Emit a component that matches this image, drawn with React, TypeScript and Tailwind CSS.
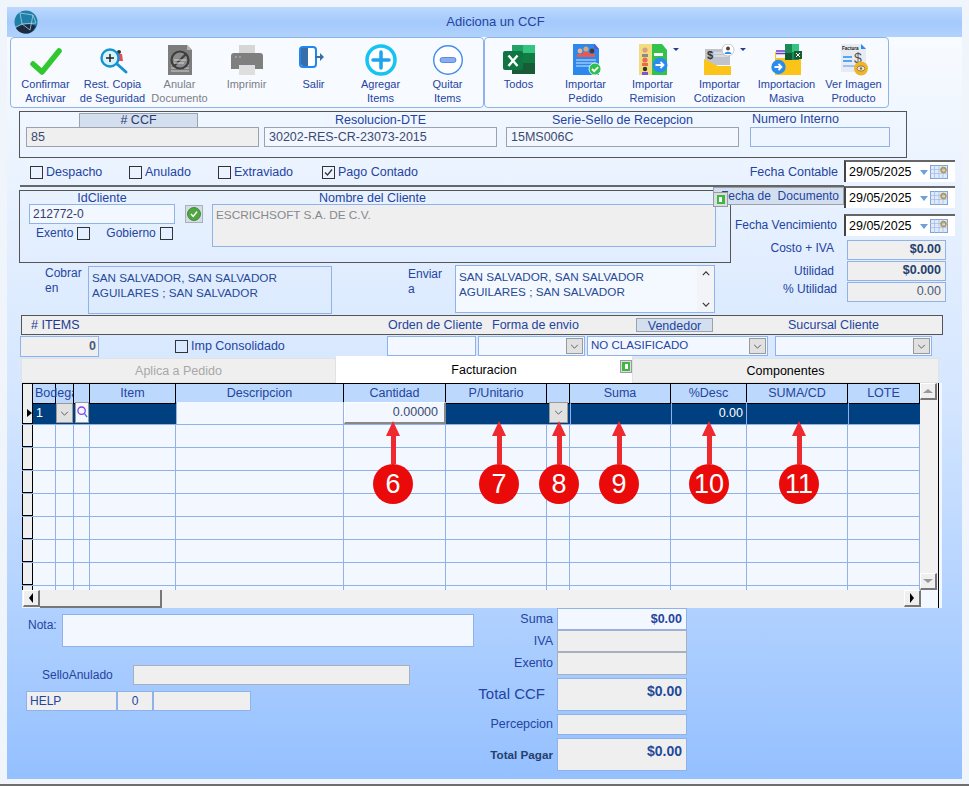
import type { ReactNode } from "react";

const font = "font-[Liberation_Sans,Arial,sans-serif] [font-family:Liberation_Sans,Arial,sans-serif]";
const blue = "text-[#2444a0]";

const COLS =
  "grid grid-cols-[11px_23px_18px_16px_86px_168px_102px_101px_23px_101px_76px_101px_72px]";

const toolbarLeft = [
  { a: "Confirmar", b: "Archivar", icon: <CheckIcon /> },
  { a: "Rest. Copia", b: "de Seguridad", icon: <RestIcon /> },
  { a: "Anular", b: "Documento", icon: <AnularIcon />, muted: true },
  { a: "Imprimir", b: "", icon: <PrintIcon />, muted: true },
  { a: "Salir", b: "", icon: <ExitIcon /> },
  { a: "Agregar", b: "Items", icon: <PlusIcon /> },
  { a: "Quitar", b: "Items", icon: <MinusIcon /> },
];

const toolbarRight = [
  { a: "Todos", b: "", icon: <ExcelIcon /> },
  { a: "Importar", b: "Pedido", icon: <PedidoIcon /> },
  { a: "Importar", b: "Remision", icon: <RemisionIcon />, menu: true },
  { a: "Importar", b: "Cotizacion", icon: <CotizacionIcon />, menu: true },
  { a: "Importacion", b: "Masiva", icon: <MasivaIcon /> },
  { a: "Ver Imagen", b: "Producto", icon: <VerIcon /> },
];

const markers = [
  { n: 6, pos: "left-[351px]" },
  { n: 7, pos: "left-[457px]" },
  { n: 8, pos: "left-[517px]" },
  { n: 9, pos: "left-[577px]" },
  { n: 10, pos: "left-[667px]" },
  { n: 11, pos: "left-[757px]" },
];

function CheckIcon() {
  return (
    <svg viewBox="0 0 32 32" className="w-8 h-8">
      <path d="M3 20l9 8L29 7" fill="none" stroke="#2fc92f" strokeWidth="5.5" strokeLinecap="round" strokeLinejoin="round" />
    </svg>
  );
}

function RestIcon() {
  return (
    <svg viewBox="0 0 32 32" className="w-8 h-8">
      <circle cx="22" cy="8" r="2" fill="#333" />
      <path d="M20 10h5l1 7h-6z" fill="#e0505a" />
      <circle cx="13" cy="14" r="8.5" fill="#d6f3fb" stroke="#1493d1" strokeWidth="2.4" />
      <path d="M13 10v8M9 14h8" stroke="#222" strokeWidth="1.5" />
      <path d="M20 20l9 8" stroke="#1493d1" strokeWidth="3" strokeLinecap="round" />
    </svg>
  );
}

function AnularIcon() {
  return (
    <svg viewBox="0 0 32 32" className="w-8 h-8">
      <path d="M4 1h19l5 5v25H4z" fill="#7d7d7d" />
      <path d="M23 1l5 5h-5z" fill="#b5b5b5" />
      <path d="M7 21h18M7 24h18M7 27h18" stroke="#cfcfcf" strokeWidth="1" />
      <circle cx="16" cy="16" r="8.5" fill="#8c8c8c" stroke="#3e3e3e" strokeWidth="2.2" />
      <path d="M10 22L22 10" stroke="#3e3e3e" strokeWidth="2.2" />
      <path d="M10 16h12M10 19h10" stroke="#d8d8d8" strokeWidth="1" />
    </svg>
  );
}

function PrintIcon() {
  return (
    <svg viewBox="0 0 32 32" className="w-8 h-8">
      <path d="M8 1h16v8H8z" fill="#d6d6d6" />
      <path d="M3 9h26a3 3 0 013 3v13H0V12a3 3 0 013-3z" fill="#7f7f7f" />
      <circle cx="5" cy="13" r="1" fill="#a8a8a8" />
      <circle cx="9" cy="13" r="1" fill="#a8a8a8" />
      <path d="M8 21h16v10H8z" fill="#dedede" />
    </svg>
  );
}

function ExitIcon() {
  return (
    <svg viewBox="0 0 32 32" className="w-8 h-8">
      <rect x="2" y="3" width="16" height="20" rx="3" fill="#fff" stroke="#1e88f0" strokeWidth="2" />
      <path d="M3 4h7v18H5a2 2 0 01-2-2z" fill="#3a6ea8" />
      <path d="M17 13h7" stroke="#3a6ea8" strokeWidth="2" />
      <path d="M22 9l4 4-4 4z" fill="#3a6ea8" />
    </svg>
  );
}

function PlusIcon() {
  return (
    <svg viewBox="0 0 32 32" className="w-8 h-8">
      <circle cx="16" cy="16" r="14" fill="#fff" stroke="#17c3f2" strokeWidth="3.5" />
      <path d="M16 8v16M8 16h16" stroke="#1ca5ee" strokeWidth="3.5" strokeLinecap="round" />
    </svg>
  );
}

function MinusIcon() {
  return (
    <svg viewBox="0 0 32 32" className="w-8 h-8">
      <circle cx="16" cy="16" r="14.3" fill="#fff" stroke="#3f8cf0" strokeWidth="1.4" />
      <rect x="8" y="13.5" width="16" height="5" rx="2.5" fill="#86aef0" stroke="#3f78e0" strokeWidth="0.8" />
    </svg>
  );
}

function ExcelIcon() {
  return (
    <svg viewBox="0 0 32 32" className="w-8 h-8">
      <path d="M9 1h23v29H9z" fill="#21a366" />
      <path d="M20 1h12v8H20z" fill="#33c481" />
      <path d="M20 9h12v10H20z" fill="#107c41" />
      <path d="M9 19h23v11H9z" fill="#185c37" />
      <rect x="0" y="7" width="20" height="19" rx="2" fill="#0f7542" />
      <path d="M5.5 11.5l9 10.5M14.5 11.5l-9 10.5" stroke="#fff" strokeWidth="2.4" />
    </svg>
  );
}

function PedidoIcon() {
  return (
    <svg viewBox="0 0 32 32" className="w-8 h-8">
      <path d="M3 0h22l4 5v26H3z" fill="#2d88ee" />
      <path d="M24 0l5 5h-5z" fill="#6b4fd8" />
      <circle cx="10" cy="7" r="2.4" fill="#f0b08a" />
      <circle cx="16" cy="5" r="2.6" fill="#e8a070" />
      <circle cx="22" cy="7" r="2.4" fill="#4a3a30" />
      <path d="M7 13v-3h6v3zM13 13V8h6v5zM19 13v-3h6v3z" fill="#e85a50" />
      <path d="M6 16h20M6 19h20M6 22h14" stroke="#cfe6ff" strokeWidth="1.2" />
      <circle cx="25" cy="25" r="6" fill="#2fc04f" stroke="#fff" strokeWidth="0.8" />
      <path d="M22 25l2.2 2.2 4-4" fill="none" stroke="#fff" strokeWidth="1.8" />
    </svg>
  );
}

function RemisionIcon() {
  return (
    <svg viewBox="0 0 32 32" className="w-8 h-8">
      <path d="M2 0h13v31H2z" fill="#f2dc80" />
      <path d="M15 0h10l5 6v25H15z" fill="#33c24a" />
      <path d="M17 9h9v3h-9zM17 16h7v3h-7z" fill="#fff" />
      <circle cx="8" cy="6" r="2.6" fill="#d9a080" />
      <path d="M5 13v-3h6v3z" fill="#8a8a8a" />
      <circle cx="8" cy="16" r="2.6" fill="#e86a50" />
      <path d="M5 22v-3h6v3z" fill="#e86a50" />
      <circle cx="8" cy="25" r="2.2" fill="#333" />
      <path d="M5 31v-3h6v3z" fill="#7a5ac8" />
      <circle cx="23" cy="21" r="7.5" fill="#2b8cf0" />
      <path d="M18.5 21h8M23.5 18l3 3-3 3" fill="none" stroke="#fff" strokeWidth="1.8" />
    </svg>
  );
}

function CotizacionIcon() {
  return (
    <svg viewBox="0 0 32 32" className="w-8 h-8">
      <path d="M1 5h25v16H1z" fill="#bfc4cc" />
      <path d="M10 9h14M10 12h14" stroke="#eef1f6" strokeWidth="1.2" />
      <text x="3" y="15" fontSize="11" fontWeight="700" fill="#333" fontFamily="Liberation Sans">$</text>
      <circle cx="24" cy="6" r="6" fill="#fff" stroke="#b5bcc8" strokeWidth="0.8" />
      <circle cx="24" cy="4.5" r="2" fill="#5a4030" />
      <path d="M20.5 10c.5-3 6.5-3 7 0z" fill="#2f8ce0" />
      <path d="M0 15l14 7h13v9H0z" fill="#fcc419" />
    </svg>
  );
}

function MasivaIcon() {
  return (
    <svg viewBox="0 0 32 32" className="w-8 h-8">
      <path d="M4 8h26v23H4z" fill="#fcc419" />
      <path d="M5 6h14v8H5z" fill="#f4f4f4" />
      <path d="M5 7h14M5 9.5h14" stroke="#6a3fc8" strokeWidth="1.3" />
      <path d="M14 0h14v16H14z" fill="#1c8a55" />
      <path d="M21 0h7v8h-7z" fill="#33c481" />
      <path d="M14 9h7v7h-7z" fill="#0f5a35" />
      <rect x="23" y="7" width="8" height="8" fill="#185c37" />
      <path d="M25 9l4 4M29 9l-4 4" stroke="#fff" strokeWidth="1" />
      <circle cx="7.5" cy="23" r="7.2" fill="#2b8cf0" />
      <path d="M3.5 23h7M7.5 20l3 3-3 3" fill="none" stroke="#fff" strokeWidth="1.8" />
    </svg>
  );
}

function VerIcon() {
  return (
    <svg viewBox="0 0 32 32" className="w-8 h-8">
      <path d="M3 0h21l4 4v24H3z" fill="#e7ecf3" />
      <path d="M23 0l5 5h-5z" fill="#2b8cf0" />
      <text x="4" y="5.5" fontSize="4.6" fontWeight="700" fill="#222" fontFamily="Liberation Sans">Factura</text>
      <path d="M5 13h9M5 17h9" stroke="#2b8cf0" strokeWidth="1.6" />
      <text x="16" y="19" fontSize="14" fill="#555" fontFamily="Liberation Sans">$</text>
      <path d="M5 22h14" stroke="#9fc2ee" strokeWidth="2" />
      <circle cx="23" cy="24.5" r="7" fill="#f0b429" />
      <ellipse cx="23" cy="24.5" rx="4" ry="2.6" fill="#f3e6c0" stroke="#7a6a50" strokeWidth="0.8" />
      <circle cx="23" cy="24.5" r="1.2" fill="#7a6a50" />
    </svg>
  );
}

function Globe() {
  return (
    <svg viewBox="0 0 24 24" className="w-6 h-6">
      <circle cx="12" cy="12" r="11.5" fill="#1f7fa8" />
      <path d="M2 18c4-4 14-5 20-2-3 6-6 7.5-10 7.5S4 22 2 18z" fill="#1d2a3f" />
      <path d="M6 3l2 11 8 6M6 3l13 2 3 8-14 1-6 3M19 5l-3 15" fill="none" stroke="#a8cfe0" strokeWidth="0.8" />
    </svg>
  );
}

function ToolButton({ a, b, icon, muted, menu }: { a: string; b: string; icon: ReactNode; muted?: boolean; menu?: boolean }) {
  return (
    <div className={`relative w-[67px] flex flex-col items-center text-[11px] leading-[14px] whitespace-nowrap ${muted ? "text-[#7b7f88]" : blue}`}>
      <div className="h-[39px] pt-[6px]">{icon}</div>
      <div>{a}</div>
      <div>{b}</div>
      {menu && <div className="absolute top-[10px] right-[7px] w-0 h-0 border-x-[3px] border-x-transparent border-t-[3px] border-t-[#1f3f90]" />}
    </div>
  );
}

function Check({ label, checked, className = "" }: { label: string; checked?: boolean; className?: string }) {
  return (
    <div className={`flex items-center gap-[3px] ${className}`}>
      <CheckBox checked={checked} />
      <span>{label}</span>
    </div>
  );
}

function CheckBox({ checked }: { checked?: boolean }) {
  return (
    <div className="w-[13px] h-[13px] border border-[#333] shrink-0">
      {checked && (
        <svg viewBox="0 0 11 11" className="w-[11px] h-[11px]">
          <path d="M2 5.5l2.5 2.5L9 2.5" fill="none" stroke="#333" strokeWidth="1.2" />
        </svg>
      )}
    </div>
  );
}

function Chevron({ className = "" }: { className?: string }) {
  return (
    <div className={`flex items-center justify-center bg-[#e1e1e1] border border-[#9a9a9a] ${className}`}>
      <svg viewBox="0 0 10 6" className="w-[9px] h-[5px]">
        <path d="M1 1l4 4 4-4" fill="none" stroke="#444" strokeWidth="1" />
      </svg>
    </div>
  );
}

function Select({ value = "", className = "" }: { value?: string; className?: string }) {
  return (
    <div className={`h-[20px] flex items-center justify-between bg-[#f3f7ff] border border-[#8fb3e8] pl-[3px] pr-[1px] ${className}`}>
      <span className="text-[11.5px]">{value}</span>
      <Chevron className="w-[17px] h-[16px]" />
    </div>
  );
}

function DateInput() {
  return (
    <div className="w-[111px] h-[22px] shrink-0 flex items-center bg-white border-t-2 border-l-2 border-t-[#666] border-l-[#444] pl-[3px] text-black">
      <span className="w-[71px]">29/05/2025</span>
      <div className="w-0 h-0 border-x-[4px] border-x-transparent border-t-[5px] border-t-[#6f9fdc]" />
      <svg viewBox="0 0 18 14" className="w-[18px] h-[14px] ml-[2px]">
        <rect x="0.5" y="0.5" width="17" height="13" fill="#dfe9fa" stroke="#7ea4dc" />
        <path d="M0 4.5h18M0 8.5h18M4.5 0v14M9 0v14M13 0v14" stroke="#9dbbe6" strokeWidth="0.7" />
        <circle cx="13.5" cy="5" r="2.4" fill="none" stroke="#b8964a" strokeWidth="1.6" />
      </svg>
    </div>
  );
}

function Stat({ label, value, bold, labelClass = "mr-[13px]" }: { label: string; value: string; bold?: boolean; labelClass?: string }) {
  return (
    <div className="flex items-center justify-end h-[21px] pr-[9px]">
      <span className={`text-[12px] whitespace-nowrap ${labelClass}`}>{label}</span>
      <div className={`w-[99px] h-[20px] flex items-center justify-end pr-[4px] bg-[#efefef] border border-[#8fb3e8] text-[#4a5a78] ${bold ? "font-bold text-[#24406f]" : ""}`}>
        {value}
      </div>
    </div>
  );
}

function SmallGreen({ className = "" }: { className?: string }) {
  return (
    <div className={`w-[12px] h-[13px] flex items-center justify-center bg-[#d8dde6] border border-[#9a9a9a] ${className}`}>
      <div className="w-[8px] h-[9px] bg-[#3fb83f] flex justify-center">
        <div className="w-[3px] h-[5px] mt-[2px] bg-white" />
      </div>
    </div>
  );
}

function Marker({ n, pos }: { n: number; pos: string }) {
  return (
    <div className={`absolute top-[38px] w-[40px] flex flex-col items-center ${pos}`}>
      <div className="w-0 h-0 border-x-[7.5px] border-x-transparent border-b-[15px] border-b-[#ee2a2e]" />
      <div className="w-[5px] h-[28px] bg-[#ee2a2e]" />
      <div className="w-[40px] h-[40px] rounded-full bg-[#ea0a0a] flex items-center justify-center text-white text-[27px] leading-none">
        {n}
      </div>
    </div>
  );
}

function EmptyRow() {
  return (
    <div className={`${COLS} h-[23px] border-b border-[#8fb3e8]`}>
      <div className="bg-[#efefef] border-x border-b border-x-black border-b-black" />
      {Array.from({ length: 12 }).map((_, i) => (
        <div key={i} className="border-r border-[#8fb3e8]" />
      ))}
    </div>
  );
}

function HeadCell({ children }: { children?: ReactNode }) {
  return (
    <div className="bg-[#bcd8fc] border-r border-y border-black flex items-center justify-center overflow-hidden whitespace-nowrap">
      {children}
    </div>
  );
}

function SumRow({ label, value, labelClass = "", boxClass = "h-[21px] border-[#8fb3e8] bg-[#efefef]" }: { label: string; value?: string; labelClass?: string; boxClass?: string }) {
  return (
    <div className="flex items-center justify-end">
      <span className={`mr-[4px] ${labelClass}`}>{label}</span>
      <div className={`w-[130px] shrink-0 flex justify-end pr-[4px] border ${boxClass}`}>{value}</div>
    </div>
  );
}

export default function App() {
  return (
    <div className={`w-[969px] h-[786px] overflow-hidden bg-[#f0f5fb] border-b-2 border-b-[#6e6e6e] px-[7px] pt-[7px] text-[12.5px] ${font} ${blue}`}>
      {/* Title bar */}
      <div className="relative w-[955px] h-[30px] flex items-center justify-center pl-[22px] bg-gradient-to-b from-[#bcd9ff] via-[#a4c9fc] to-[#b0d2fc] text-[13px]">
        <div className="absolute left-[7px] top-[3px]">
          <Globe />
        </div>
        Adiciona un CCF
      </div>

      <div className="w-[955px] h-[742px] bg-gradient-to-b from-[#f8fbff] via-[#d3e5ff] to-[#94c0ff]">
        {/* Toolbar */}
        <div className="flex ml-[3px]">
          <div className="w-[474px] h-[71px] flex pl-[1px] border border-[#8fb3e8] rounded-[4px] bg-[#f7faff]">
            {toolbarLeft.map((t) => (
              <ToolButton key={t.a} {...t} />
            ))}
          </div>
          <div className="w-[405px] h-[71px] flex border border-[#8fb3e8] rounded-[4px] bg-[#f7faff]">
            {toolbarRight.map((t) => (
              <ToolButton key={t.a + t.b} {...t} />
            ))}
          </div>
        </div>

        {/* Documento */}
        <div className="w-[888px] h-[47px] ml-[12px] mt-[3px] flex border border-[#555] pl-[6px] pt-[1px]">
          <div className="w-[233px]">
            <div className="w-[119px] h-[14px] ml-[53px] flex items-center justify-center bg-[#d3dfee] border border-b-0 border-[#9aa3ad] text-[#2a3a70]"># CCF</div>
            <div className="h-[20px] flex items-center pl-[4px] bg-[#efefef] border border-[#9aa3ad] text-[#3a4a70]">85</div>
          </div>
          <div className="w-[233px] ml-[5px]">
            <div className="h-[14px] leading-[14px] text-center">Resolucion-DTE</div>
            <div className="h-[20px] flex items-center pl-[4px] bg-[#f3f7ff] border border-[#9aa3ad] text-[#3a4a70]">30202-RES-CR-23073-2015</div>
          </div>
          <div className="w-[233px] ml-[9px]">
            <div className="h-[14px] leading-[14px] text-center">Serie-Sello de Recepcion</div>
            <div className="h-[20px] flex items-center pl-[4px] bg-[#f3f7ff] border border-[#9aa3ad] text-[#3a4a70]">15MS006C</div>
          </div>
          <div className="w-[140px] ml-[11px]">
            <div className="h-[14px] leading-[13px] pl-[2px]">Numero Interno</div>
            <div className="h-[20px] border border-[#8fb3e8]" />
          </div>
        </div>

        {/* Checks y fecha contable */}
        <div className="flex mt-[2px] ml-[13px] h-[27px]">
          <div className="w-[824px] flex items-center border-b-2 border-[#666] pl-[10px] pr-[6px]">
            <Check label="Despacho" className="w-[99px]" />
            <Check label="Anulado" className="w-[89px]" />
            <Check label="Extraviado" className="w-[104px]" />
            <Check label="Pago Contado" checked />
            <span className="ml-auto">Fecha Contable</span>
          </div>
          <DateInput />
        </div>

        <div className="flex h-[128px]">
          {/* Cliente */}
          <div className="w-[724px] pl-[12px]">
            <div className="w-[712px] h-[73px] mt-[3px] flex border border-[#555] pl-[9px]">
              <div className="w-[146px]">
                <div className="h-[13px] leading-[14px] text-center">IdCliente</div>
                <div className="h-[20px] flex items-center pl-[3px] text-[12px] bg-[#f3f7ff] border border-[#8fb3e8] text-[#33406a]">212772-0</div>
                <div className="flex items-center mt-[1px] h-[16px] pl-[7px] text-[12px]">
                  <span className="mr-[4px]">Exento</span>
                  <CheckBox />
                  <span className="ml-[16px] mr-[4px]">Gobierno</span>
                  <CheckBox />
                </div>
              </div>
              <div className="w-[18px] h-[18px] ml-[10px] mt-[14px] flex items-center justify-center bg-[#d6dce4] border border-[#a8b0ba]">
                <svg viewBox="0 0 14 14" className="w-[14px] h-[14px]">
                  <circle cx="7" cy="7" r="6.5" fill="#4fa83f" stroke="#2d7a2a" strokeWidth="0.8" />
                  <path d="M4 7l2.2 2.4L10 4.6" fill="none" stroke="#fff" strokeWidth="1.5" />
                </svg>
              </div>
              <div className="w-[504px] ml-[9px]">
                <div className="h-[13px] leading-[14px] pl-[107px]">Nombre del Cliente</div>
                <div className="h-[43px] bg-[#efefef] border border-[#8fb3e8] pl-[3px] pt-[2px] text-[11.8px] text-[#85888e]">ESCRICHSOFT S.A. DE C.V.</div>
              </div>
            </div>
            <div className="flex mt-[2px] leading-[15px] text-[12px]">
              <div className="w-[69px] pl-[26px] pt-[1px]">
                Cobrar
                <br />
                en
              </div>
              <div className="w-[244px] h-[48px] mt-[1px] border border-[#8fb3e8] pl-[3px] pt-[3px] text-[11.7px] text-[#274a96]">
                SAN SALVADOR, SAN SALVADOR
                <br />
                AGUILARES ; SAN SALVADOR
              </div>
              <div className="w-[47px] ml-[76px] pt-[2px]">
                Enviar
                <br />a
              </div>
              <div className="w-[260px] h-[48px] flex justify-between bg-[#f4f8ff] border border-[#8fb3e8] pl-[3px] pt-[3px] text-[11.7px] text-[#274a96]">
                <div>
                  SAN SALVADOR, SAN SALVADOR
                  <br />
                  AGUILARES ; SAN SALVADOR
                </div>
                <div className="w-[17px] -mt-[3px] flex flex-col justify-between items-center py-[5px] bg-[#f2f4f7]">
                  <svg viewBox="0 0 10 6" className="w-[8px] h-[5px]"><path d="M1 5l4-4 4 4" fill="none" stroke="#333" strokeWidth="1.4" /></svg>
                  <svg viewBox="0 0 10 6" className="w-[8px] h-[5px]"><path d="M1 1l4 4 4-4" fill="none" stroke="#333" strokeWidth="1.4" /></svg>
                </div>
              </div>
            </div>
          </div>

          {/* Fechas */}
          <div className="w-[224px]">
            <div className="flex justify-end -ml-[18px] -mt-[1px] mb-[6px]">
              <div className="relative w-[131px] h-[18px] mt-[1px] flex items-center justify-end pr-[4px] bg-[#d3dfee] border border-[#9aa3ad] whitespace-nowrap text-[12px]">
                Fecha de&nbsp; Documento
                <SmallGreen className="absolute -left-px top-[4px] w-[15px] h-[15px]" />
              </div>
              <DateInput />
            </div>
            <div className="flex justify-end items-center">
              <span className="mr-[7px] whitespace-nowrap text-[12px]">Fecha Vencimiento</span>
              <DateInput />
            </div>
            <div className="mt-[3px]">
              <Stat label="Costo + IVA" value="$0.00" bold labelClass="mr-[13px] -mt-[4px]" />
              <Stat label="Utilidad" value="$0.000" bold />
              <Stat label="% Utilidad" value="0.00" labelClass="mr-[10px] -mt-[5px]" />
            </div>
          </div>
        </div>

        {/* Encabezado items */}
        <div className="w-[922px] h-[20px] ml-[14px] flex items-center pl-[9px] bg-[#efefef] border border-[#555]">
          <span className="w-[357px] text-[#203a90]"># ITEMS</span>
          <span className="w-[104px]">Orden de Cliente</span>
          <span className="w-[144px]">Forma de envio</span>
          <span className="w-[77px] h-[14px] leading-[14px] text-center bg-[#d3dfee] border border-[#9aa3ad]">Vendedor</span>
          <span className="ml-[75px]">Sucursal Cliente</span>
        </div>
        <div className="flex items-center h-[22px] ml-[13px]">
          <div className="w-[79px] h-[21px] flex items-center justify-end pr-[2px] font-bold bg-[#efefef] border border-[#8fb3e8] text-[#4a5a78]">0</div>
          <div className="w-[288px] pl-[76px] flex">
            <Check label="Imp Consolidado" />
          </div>
          <div className="w-[89px] h-[20px] bg-[#f3f7ff] border border-[#8fb3e8]" />
          <Select className="w-[107px] ml-[2px]" />
          <Select value="NO CLASIFICADO" className="w-[181px] ml-[2px]" />
          <Select className="w-[157px] ml-[7px]" />
        </div>

        {/* Tabs */}
        <div className="flex items-end h-[28px] -mt-[2px] ml-[14px] text-center">
          <div className="w-[315px] h-[25px] leading-[25px] bg-[#efefef] text-[#a8a8a8] border border-[#e2e2e2]">Aplica a Pedido</div>
          <div className="relative w-[296px] h-[27px] leading-[28px] bg-white text-black">
            Facturacion
            <SmallGreen className="absolute right-0 top-[4px]" />
          </div>
          <div className="w-[307px] h-[25px] leading-[25px] bg-[#efefef] text-black border border-[#e2e2e2]">Componentes</div>
        </div>

        {/* Grid */}
        <div className="relative w-[920px] h-[225px] ml-[15px] bg-[#f3f7ff]">
          <div className="w-[917px] h-[225px] border-r border-black">
            <div className="flex h-[207px]">
              <div className="w-[898px] h-[207px] overflow-hidden">
                <div className={`${COLS} h-[19px]`}>
                  <div className="bg-[#efefef] border border-black" />
                  <div className="relative z-10 bg-[#bcd8fc] border-r border-y border-black flex items-center whitespace-nowrap pl-[2px]">
                    <span className="block w-[38px] shrink-0 overflow-hidden">Bodega</span>
                  </div>
                  <HeadCell />
                  <HeadCell />
                  <HeadCell>Item</HeadCell>
                  <HeadCell>Descripcion</HeadCell>
                  <HeadCell>Cantidad</HeadCell>
                  <HeadCell>P/Unitario</HeadCell>
                  <HeadCell />
                  <HeadCell>Suma</HeadCell>
                  <HeadCell>%Desc</HeadCell>
                  <HeadCell>SUMA/CD</HeadCell>
                  <HeadCell>LOTE</HeadCell>
                </div>
                <div className={`${COLS} h-[23px] bg-[#004080] border-b border-[#8fb3e8] text-white`}>
                  <div className="bg-[#efefef] border-x border-b border-x-black border-b-black flex items-center justify-end">
                    <div className="w-0 h-0 border-y-[4px] border-y-transparent border-l-[5px] border-l-black" />
                  </div>
                  <div className="flex items-center pl-[3px]">1</div>
                  <Chevron className="w-[17px] h-[20px] mt-[1px]" />
                  <div className="flex items-center justify-center w-[14px] h-[21px] ml-[1px] bg-[#f3f7ff] border border-[#9a9a9a]">
                    <svg viewBox="0 0 12 16" className="w-[11px] h-[15px]">
                      <circle cx="5" cy="6" r="4" fill="none" stroke="#8a3fe8" strokeWidth="1.4" />
                      <path d="M8 9l3 4" stroke="#3f6fe8" strokeWidth="1.4" />
                    </svg>
                  </div>
                  <div />
                  <div className="bg-[#f3f7ff] border-x border-[#8fb3e8]" />
                  <div className="flex items-center justify-end pr-[6px] bg-[#f3f7ff] border-t border-l border-t-white border-l-white border-r-2 border-b-2 border-r-[#888] border-b-[#888] text-[#3a4a70]">0.00000</div>
                  <div />
                  <Chevron className="w-[19px] h-[21px] ml-[2px]" />
                  <div className="border-l border-[#8fb3e8]" />
                  <div className="flex items-center justify-end pr-[3px] border-x border-[#8fb3e8]">0.00</div>
                  <div />
                  <div className="border-l border-[#8fb3e8]" />
                </div>
                {Array.from({ length: 8 }).map((_, i) => (
                  <EmptyRow key={i} />
                ))}
              </div>
              <div className="w-[18px] flex flex-col justify-between bg-[#f1f1f1]">
                <ScrollButton dir="up" />
                <ScrollButton dir="down" />
              </div>
            </div>
            <div className="flex h-[18px] w-[899px] pl-[1px] bg-[#f1f1f1]">
              <ScrollButton dir="left" />
              <div className="w-[122px] bg-[#efefef] border-r-2 border-b-2 border-[#777]" />
              <div className="flex-1" />
              <ScrollButton dir="right" />
            </div>
          </div>
          {markers.map((m) => (
            <Marker key={m.n} {...m} />
          ))}
        </div>

        {/* Pie */}
        <div className="flex">
          <div className="w-[480px] pl-[19px] text-[12px]">
            <div className="flex mt-[6px]">
              <span className="w-[36px] pl-[2px] pt-[2px]">Nota:</span>
              <div className="w-[412px] h-[33px] bg-[#f3f7ff] border border-[#8fb3e8]" />
            </div>
            <div className="flex items-center mt-[18px]">
              <span className="w-[107px] pl-[16px]">SelloAnulado</span>
              <div className="w-[277px] h-[20px] bg-[#efefef] border border-[#a8b0c0]" />
            </div>
            <div className="flex h-[20px] mt-[6px]">
              <div className="w-[91px] flex items-center pl-[3px] bg-[#efefef] border border-[#8fb3e8]">HELP</div>
              <div className="w-[36px] flex items-center justify-center bg-[#efefef] border border-[#8fb3e8]">0</div>
              <div className="w-[98px] bg-[#efefef] border border-[#8fb3e8]" />
            </div>
          </div>
          <div className="w-[200px] flex flex-col text-right">
            <SumRow label="Suma" value="$0.00" boxClass="h-[22px] items-center font-bold bg-[#f3f7ff] border-[#8fb3e8]" />
            <SumRow label="IVA" boxClass="h-[22px] bg-[#efefef] border-[#a8b0c0]" />
            <SumRow label="Exento" boxClass="h-[23px] bg-[#efefef] border-[#a8b0c0]" />
            <div className="mt-[3px]">
              <SumRow label="Total CCF" value="$0.00" labelClass="text-[15px] mr-[12px] whitespace-nowrap" boxClass="h-[33px] pt-[2px] font-bold text-[14px] text-[#1f4a9a] bg-[#efefef] border-[#8fb3e8]" />
            </div>
            <div className="mt-[3px]">
              <SumRow label="Percepcion" />
            </div>
            <div className="mt-[3px]">
              <SumRow label="Total Pagar" value="$0.00" labelClass="font-bold text-[11.7px] whitespace-nowrap text-[#24406f] mr-[2px]" boxClass="h-[33px] pt-[2px] font-bold text-[14px] text-[#1f4a9a] bg-[#efefef] border-[#8fb3e8]" />
            </div>
          </div>
        </div>
      </div>
    </div>
  );
}

function ScrollButton({ dir }: { dir: "up" | "down" | "left" | "right" }) {
  const arrow = {
    up: "border-x-[5px] border-x-transparent border-b-[4px] border-b-[#999]",
    down: "border-x-[5px] border-x-transparent border-t-[4px] border-t-[#999]",
    left: "border-y-[5px] border-y-transparent border-r-[4px] border-r-black",
    right: "border-y-[5px] border-y-transparent border-l-[4px] border-l-black",
  }[dir];
  return (
    <div className="w-[17px] h-[17px] flex items-center justify-center bg-[#efefef] border-t border-l border-white border-r-2 border-b-2 border-r-[#777] border-b-[#777]">
      <div className={`w-0 h-0 ${arrow}`} />
    </div>
  );
}
